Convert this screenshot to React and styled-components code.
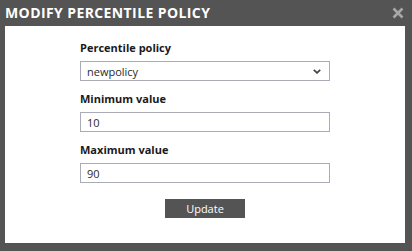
import React from 'react'
import styled, { createGlobalStyle } from 'styled-components'

const GlobalStyle = createGlobalStyle`
  html, body { margin: 0; padding: 0; background: #545454; }
  body { font-family: "Open Sans", "Noto Sans", sans-serif; }
`

const Dialog = styled.div`
  width: 412px;
  height: 251px;
  background: #545454;
  display: flex;
  flex-direction: column;
  box-sizing: border-box;
  padding: 0 7px 8px 5px;
`

const Header = styled.div`
  height: 26px;
  display: flex;
  align-items: center;
  justify-content: space-between;
  flex-shrink: 0;
`

const Title = styled.h1`
  margin: 0;
  font-size: 14px;
  font-weight: 700;
  color: #ffffff;
  line-height: 20px;
  letter-spacing: 0.4px;
`

const Close = styled.button`
  border: 0;
  background: none;
  padding: 0;
  width: 12px;
  height: 12px;
  margin-right: 1px;
  display: flex;
  align-items: center;
  justify-content: center;
  cursor: pointer;
`

const Body = styled.div`
  flex: 1;
  background: #ffffff;
  display: flex;
  justify-content: center;
  padding-top: 14px;
`

const Form = styled.form`
  width: 250px;
  display: flex;
  flex-direction: column;
`

const Label = styled.label`
  font-size: 11px;
  font-weight: 700;
  color: #1a1a1a;
  line-height: 15px;
  margin-top: ${p => (p.$first ? '0' : '10px')};
  margin-bottom: 6px;
`

const SelectWrap = styled.div`
  position: relative;
  height: 20px;
  border: 1px solid #a9abb6;
  box-sizing: border-box;
  display: flex;
  align-items: center;
  padding-left: 6px;
  font-size: 11px;
  color: #2a2a2a;
`

const Chevron = styled.svg`
  position: absolute;
  right: 8px;
  top: 7px;
`

const Input = styled.input`
  height: 20px;
  border: 1px solid #a9abb6;
  box-sizing: border-box;
  padding: 0 6px;
  font-family: inherit;
  font-size: 11px;
  color: #2a2a2a;
  outline: none;
`

const Button = styled.button`
  align-self: center;
  margin-top: 16px;
  width: 80px;
  height: 19px;
  border: 0;
  background: #545454;
  color: #ffffff;
  font-family: inherit;
  font-size: 11px;
  padding: 0;
  cursor: pointer;
`

export default function App() {
  return (
    <>
      <GlobalStyle />
      <Dialog>
        <Header>
          <Title>MODIFY PERCENTILE POLICY</Title>
          <Close aria-label="Close">
            <svg width="12" height="12" viewBox="0 0 12 12">
              <path d="M1.5 1.5 L10.5 10.5 M10.5 1.5 L1.5 10.5" stroke="#a8a8a8" strokeWidth="2.6" />
            </svg>
          </Close>
        </Header>
        <Body>
          <Form onSubmit={e => e.preventDefault()}>
            <Label $first>Percentile policy</Label>
            <SelectWrap>
              newpolicy
              <Chevron width="8" height="5" viewBox="0 0 8 5">
                <path d="M0.8 0.8 L4 3.8 L7.2 0.8" fill="none" stroke="#444" strokeWidth="1.8" />
              </Chevron>
            </SelectWrap>
            <Label>Minimum value</Label>
            <Input defaultValue="10" />
            <Label>Maximum value</Label>
            <Input defaultValue="90" />
            <Button type="submit">Update</Button>
          </Form>
        </Body>
      </Dialog>
    </>
  )
}
